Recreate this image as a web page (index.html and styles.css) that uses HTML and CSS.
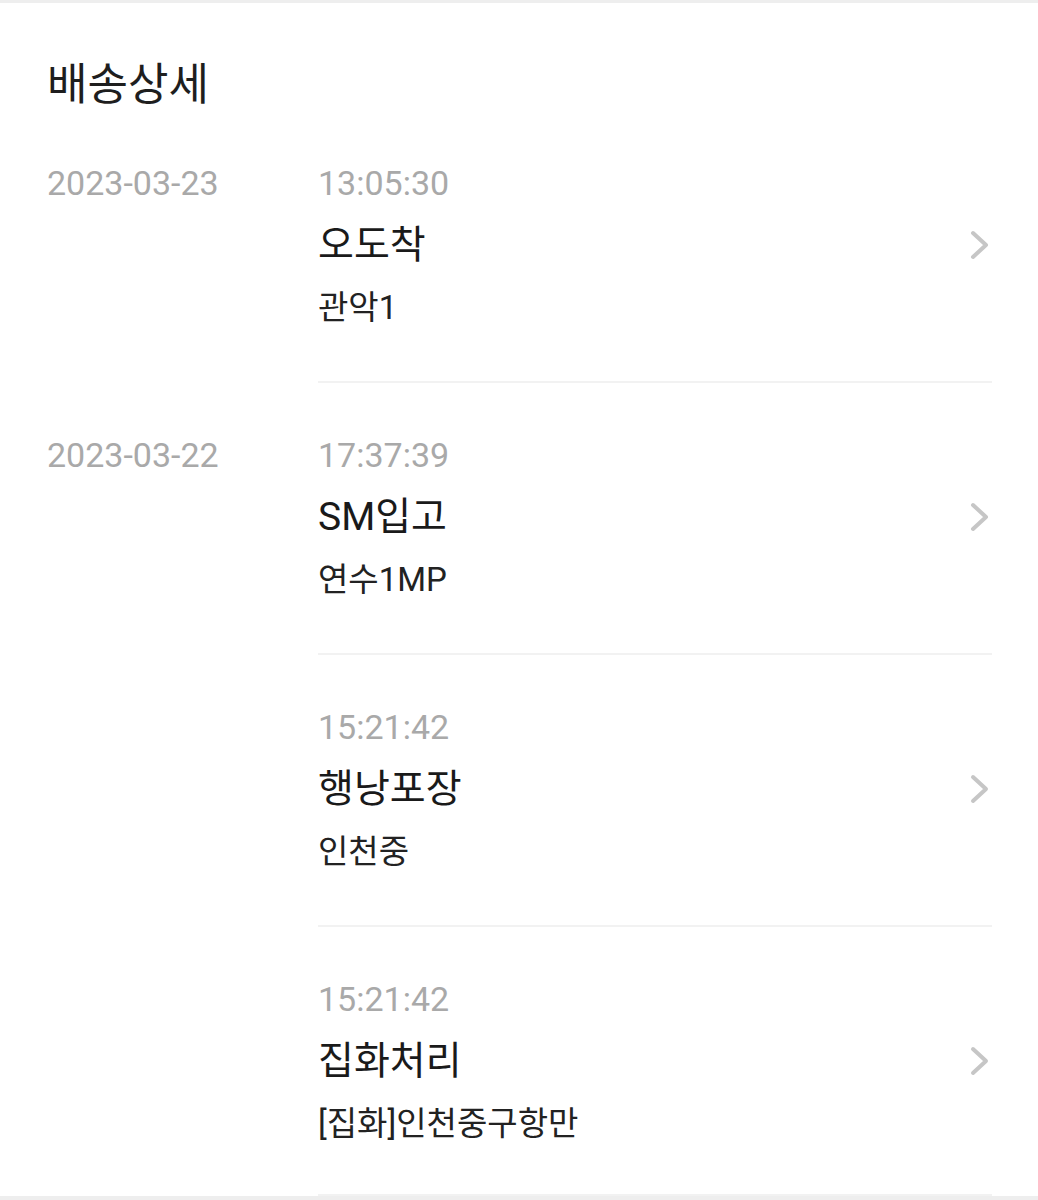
FILE: index.html
```html
<!DOCTYPE html>
<html lang="ko">
<head>
<meta charset="utf-8">
<link rel="stylesheet" href="styles.css">
</head>
<body>
<div class="card">
  <h1 class="heading">배송상세</h1>
  <div class="list">
    <div class="row">
      <div class="date">2023-03-23</div>
      <div class="content">
        <div class="time">13:05:30</div>
        <div class="title-line">
          <span class="title">오도착</span>
          <svg class="chev" viewBox="0 0 22 32" width="22" height="32"><path d="M4 4 L17 16 L4 28" fill="none" stroke="#c6c6c6" stroke-width="4" stroke-linecap="round" stroke-linejoin="round"/></svg>
        </div>
        <div class="sub">관악1</div>
      </div>
    </div>
    <div class="row">
      <div class="date">2023-03-22</div>
      <div class="content">
        <div class="time">17:37:39</div>
        <div class="title-line">
          <span class="title">SM입고</span>
          <svg class="chev" viewBox="0 0 22 32" width="22" height="32"><path d="M4 4 L17 16 L4 28" fill="none" stroke="#c6c6c6" stroke-width="4" stroke-linecap="round" stroke-linejoin="round"/></svg>
        </div>
        <div class="sub">연수1MP</div>
      </div>
    </div>
    <div class="row">
      <div class="date"></div>
      <div class="content">
        <div class="time">15:21:42</div>
        <div class="title-line">
          <span class="title">행낭포장</span>
          <svg class="chev" viewBox="0 0 22 32" width="22" height="32"><path d="M4 4 L17 16 L4 28" fill="none" stroke="#c6c6c6" stroke-width="4" stroke-linecap="round" stroke-linejoin="round"/></svg>
        </div>
        <div class="sub">인천중</div>
      </div>
    </div>
    <div class="row last">
      <div class="date"></div>
      <div class="content">
        <div class="time">15:21:42</div>
        <div class="title-line">
          <span class="title">집화처리</span>
          <svg class="chev" viewBox="0 0 22 32" width="22" height="32"><path d="M4 4 L17 16 L4 28" fill="none" stroke="#c6c6c6" stroke-width="4" stroke-linecap="round" stroke-linejoin="round"/></svg>
        </div>
        <div class="sub">[집화]인천중구항만</div>
      </div>
    </div>
  </div>
</div>
</body>
</html>
```

FILE: styles.css
```css
html, body {
  margin: 0;
  padding: 0;
  background: #eeeeee;
}
body {
  font-family: Roboto, "Noto Sans CJK KR", sans-serif;
  color: #1e1e1e;
  padding-top: 3px;
  min-height: 1197px;
}
.card {
  background: #ffffff;
  padding: 48px 46px 0 47px;
}
.heading {
  margin: 0;
  font-family: "Noto Sans CJK KR", sans-serif;
  font-size: 44px;
  font-weight: 400;
  line-height: 60px;
  color: #1e1e1e;
}
.row {
  display: grid;
  grid-template-columns: 271px 1fr;
}
.date {
  padding-top: 50px;
  font-size: 34px;
  line-height: 44px;
  color: #a9a9a9;
}
.content {
  padding: 50px 0 51px 0;
  border-bottom: 2px solid #f2f2f2;
}
.row.last .content {
  padding-bottom: 48px;
}
.time {
  font-size: 34px;
  line-height: 44px;
  color: #a9a9a9;
}
.title-line {
  margin-top: 10px;
  height: 60px;
  display: flex;
  align-items: center;
  justify-content: space-between;
}
.title {
  font-size: 39px;
  line-height: 60px;
  color: #1a1a1a;
}
.chev {
  display: block;
  margin-right: 1px;
}
.sub {
  margin-top: 11px;
  font-size: 33px;
  line-height: 44px;
  color: #222222;
}
```
